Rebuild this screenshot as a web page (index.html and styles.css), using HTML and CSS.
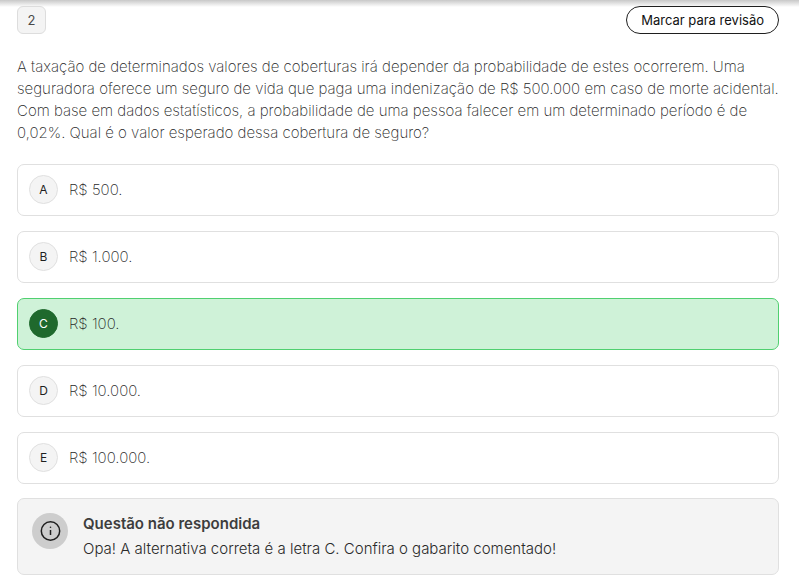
FILE: index.html
```html
<!DOCTYPE html>
<html lang="pt-BR">
<head>
    <meta charset="utf-8">
    <meta name="viewport" content="width=device-width, initial-scale=1">
    <title>Questão 2</title>
    <link rel="stylesheet" href="styles.css">
</head>
<body>
    <main class="question">
        <div class="question-header">
            <span class="number">2</span>
            <button type="button" class="btn-review">Marcar para revisão</button>
        </div>
        <p class="statement">A taxação de determinados valores de coberturas irá depender da probabilidade de estes ocorrerem. Uma seguradora oferece um seguro de vida que paga uma indenização de R$ 500.000 em caso de morte acidental. Com base em dados estatísticos, a probabilidade de uma pessoa falecer em um determinado período é de 0,02%. Qual é o valor esperado dessa cobertura de seguro?</p>
        <div class="options">
            <button type="button" class="option"><span class="letter">A</span><span>R$ 500.</span></button>
            <button type="button" class="option"><span class="letter">B</span><span>R$ 1.000.</span></button>
            <button type="button" class="option correct"><span class="letter">C</span><span>R$ 100.</span></button>
            <button type="button" class="option"><span class="letter">D</span><span>R$ 10.000.</span></button>
            <button type="button" class="option"><span class="letter">E</span><span>R$ 100.000.</span></button>
        </div>
        <div class="feedback">
            <span class="feedback-icon">
                <svg width="22" height="22" viewBox="0 0 22 22" fill="none" stroke="#1f1f1f" stroke-width="1.5" aria-hidden="true">
                    <circle cx="11.5" cy="11" r="9.2"/>
                    <path d="M11.5 10v5"/>
                    <circle cx="11.5" cy="7.3" r=".8" fill="#1f1f1f" stroke="none"/>
                </svg>
            </span>
            <div>
                <h2 class="feedback-title">Questão não respondida</h2>
                <p class="feedback-text">Opa! A alternativa correta é a letra C. Confira o gabarito comentado!</p>
            </div>
        </div>
    </main>
</body>
</html>
```
FILE: styles.css
```css
* { box-sizing: border-box; }
body {
    margin: 0;
    background: #fff linear-gradient(#c8c8c8, #fff) top / 100% 7px no-repeat;
    color: #1f1f1f;
    font-family: Inter, "Liberation Sans", sans-serif;
    font-size: 15px;
}
.question { padding: 6px 20px 12px 17px; }
.question-header {
    display: flex;
    justify-content: space-between;
    align-items: center;
}
.number {
    width: 29px;
    height: 28px;
    border: 1px solid #ddd;
    border-radius: 6px;
    background: #f4f4f4;
    color: #4a4a4a;
    font-size: 13px;
    line-height: 26px;
    text-align: center;
}
.btn-review {
    height: 28px;
    padding: 0 14px;
    border: 1px solid #1f1f1f;
    border-radius: 14px;
    background: #fff;
    color: #111;
    font: 13px Inter, "Liberation Sans", sans-serif;
    cursor: pointer;
}
.statement {
    margin: 22px 0 20px;
    font-weight: 200;
    line-height: 22px;
}
.options {
    display: flex;
    flex-direction: column;
    gap: 15px;
}
.option {
    display: flex;
    align-items: center;
    gap: 11px;
    width: 100%;
    height: 52px;
    padding: 0 11px 1px;
    border: 1px solid #e0e0e0;
    border-radius: 7px;
    background: #fff;
    color: #1f1f1f;
    font: 200 15px Inter, "Liberation Sans", sans-serif;
    text-align: left;
    cursor: pointer;
}
.letter {
    width: 29px;
    height: 29px;
    border: 1px solid #e0e0e0;
    border-radius: 50%;
    background: #f4f4f4;
    color: #1f1f1f;
    font-size: 12px;
    font-weight: 400;
    line-height: 28px;
    text-align: center;
}
.correct { border-color: #50d070; background: #cff2d8; }
.correct .letter { border-color: #1f692d; background: #1f692d; color: #fff; }
.feedback {
    display: flex;
    gap: 15px;
    margin-top: 14px;
    padding: 14px;
    border: 1px solid #e0e0e0;
    border-radius: 7px;
    background: #f4f4f4;
}
.feedback-icon {
    display: flex;
    align-items: center;
    justify-content: center;
    width: 36px;
    height: 36px;
    border-radius: 50%;
    background: #cdcdcd;
}
.feedback-title {
    margin: 0 0 3px;
    color: #3d3d3d;
    font-size: 15px;
    font-weight: 600;
    line-height: 22px;
}
.feedback-text {
    margin: 0;
    color: #2a2a2a;
    font-weight: 300;
    line-height: 22px;
}
```
